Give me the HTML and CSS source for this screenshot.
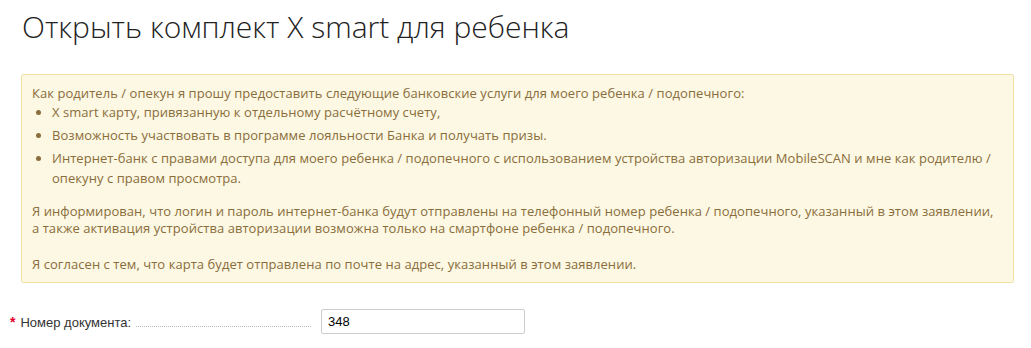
FILE: index.html
```html
<!DOCTYPE html>
<html lang="ru">
<head>
    <meta charset="UTF-8">
    <meta name="viewport" content="width=device-width, initial-scale=1.0">
    <title>Открыть комплект X smart для ребенка</title>
    <link rel="stylesheet" href="styles.css">
</head>
<body>

    <h1 class="page-title">Открыть комплект X smart для ребенка</h1>

    <div class="notice">
        <p class="notice-lead">Как родитель / опекун я прошу предоставить следующие банковские услуги для моего ребенка / подопечного:</p>
        <ul class="notice-list">
            <li>X smart карту, привязанную к отдельному расчётному счету,</li>
            <li>Возможность участвовать в программе лояльности Банка и получать призы.</li>
            <li>Интернет-банк с правами доступа для моего ребенка / подопечного с использованием устройства авторизации MobileSCAN и мне как родителю / опекуну с правом просмотра.</li>
        </ul>
        <p>Я информирован, что логин и пароль интернет-банка будут отправлены на телефонный номер ребенка / подопечного, указанный в этом заявлении, а также активация устройства авторизации возможна только на смартфоне ребенка / подопечного.</p>
        <p>Я согласен с тем, что карта будет отправлена по почте на адрес, указанный в этом заявлении.</p>
    </div>

    <div class="form-row">
        <label class="field-label" for="doc_number">
            <span class="required">*</span>
            <span class="label-text">Номер документа:</span>
            <span class="dots"></span>
        </label>
        <input type="text" id="doc_number" class="field-input" value="348">
    </div>

</body>
</html>
```

FILE: styles.css
```css
body {
    margin: 0;
    padding: 0 17px 0 21px;
    font-family: "Open Sans", Arial, sans-serif;
    background: #fff;
    color: #333;
}
.page-title {
    margin: 0;
    padding: 8px 0 0 1px;
    height: 74px;
    box-sizing: border-box;
    font-weight: 300;
    font-size: 30px;
    line-height: 38px;
    color: #222;
}
.notice {
    background: #fcf8e3;
    border: 1px solid #f3e2a4;
    border-radius: 2px;
    color: #8a6d3b;
    font-size: 13px;
    line-height: 17px;
    letter-spacing: 0.05px;
    padding: 10px 16px 9px 10px;
}
.notice p {
    margin: 0 0 19px;
}
.notice p:last-child {
    margin-bottom: 0;
}
.notice .notice-lead {
    margin: 0;
}
.notice-list {
    margin: 0 0 15px;
    padding-left: 20px;
}
.notice-list li {
    line-height: 20px;
    margin-bottom: 3px;
}
.notice-list li:last-child {
    margin-bottom: 0;
}
.form-row {
    display: flex;
    align-items: center;
    margin: 26px 0 0 -11px;
}
.field-label {
    display: flex;
    align-items: flex-end;
    width: 311px;
    font-family: Arial, "Liberation Sans", sans-serif;
    font-size: 13px;
    color: #333;
}
.required {
    color: #e4002b;
    font-weight: bold;
    font-size: 14px;
    margin-right: 5px;
}
.label-text {
    white-space: nowrap;
}
.dots {
    flex: 1;
    margin: 0 10px 3px 5px;
    border-bottom: 1px dotted #bbb;
}
.field-input {
    width: 204px;
    height: 25px;
    box-sizing: border-box;
    border: 1px solid #ccc;
    border-radius: 2px;
    padding: 0 6px;
    font-family: Arial, "Liberation Sans", sans-serif;
    font-size: 13px;
    color: #000;
}
```
